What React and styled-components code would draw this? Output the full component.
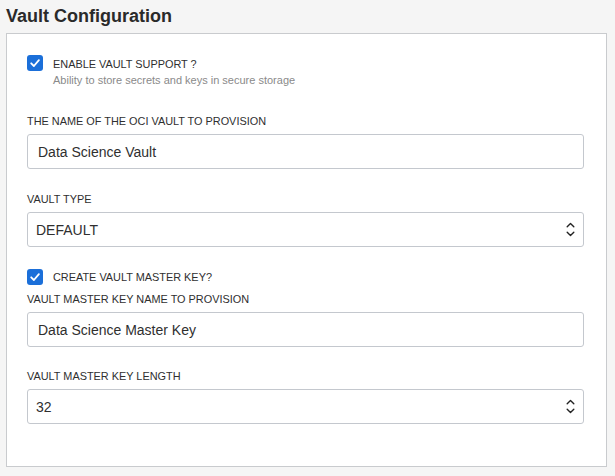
import styled, { createGlobalStyle } from 'styled-components';

const GlobalStyle = createGlobalStyle`
  body {
    margin: 0;
    background: #f5f5f5;
    font-family: 'Liberation Sans', Arial, sans-serif;
    color: #2f2f2f;
  }
`;

const Page = styled.div`
  padding: 5px 9px 9px 6px;
`;

const Title = styled.h2`
  margin: 0 0 6px 0;
  font-size: 18px;
  line-height: 22px;
  font-weight: 700;
  color: #2a2a2a;
`;

const Panel = styled.div`
  width: 601px;
  box-sizing: border-box;
  background: #ffffff;
  border: 1px solid #c9cbce;
  padding: 21px 21px 42px 20px;
  display: flex;
  flex-direction: column;
`;

const CheckRow = styled.div`
  display: flex;
  align-items: ${props => (props.$center ? 'center' : 'flex-start')};
  margin-top: ${props => props.$gap || 0}px;
`;

const Box = styled.span`
  width: 16px;
  height: 16px;
  flex: none;
  border-radius: 3px;
  background: #1b6fd9;
  display: flex;
  align-items: center;
  justify-content: center;
`;

const CheckText = styled.div`
  margin-left: 10px;
  margin-top: ${props => (props.$center ? 0 : 2)}px;
`;

const CheckLabel = styled.div`
  font-size: 10.9px;
  line-height: 14px;
  color: #2f2f2f;
`;

const Hint = styled.div`
  margin-top: 2px;
  font-size: 11px;
  line-height: 15px;
  color: #8a8a8a;
`;

const Field = styled.div`
  display: flex;
  flex-direction: column;
  margin-top: ${props => props.$gap || 0}px;
`;

const Label = styled.label`
  font-size: 10.9px;
  line-height: 14px;
  margin-bottom: 6px;
  color: #2f2f2f;
`;

const TextInput = styled.input`
  width: 557px;
  height: 35px;
  box-sizing: border-box;
  border: 1px solid #c4c8ce;
  border-radius: 3px;
  padding: 0 10px;
  font-family: 'Liberation Sans', Arial, sans-serif;
  font-size: 14px;
  color: #2f2f2f;
  background: #ffffff;
  outline: none;
`;

const Select = styled.div`
  width: 557px;
  height: 35px;
  box-sizing: border-box;
  border: 1px solid #c4c8ce;
  border-radius: 3px;
  padding: 0 8px 0 8px;
  display: flex;
  align-items: center;
  justify-content: space-between;
  font-size: 14px;
  color: #2f2f2f;
`;

function Check() {
  return (
    <Box>
      <svg width="12" height="12" viewBox="0 0 12 12">
        <path d="M2.2 6.3 L4.9 9 L9.9 3.2" fill="none" stroke="#fff" strokeWidth="1.8" strokeLinecap="round" strokeLinejoin="round" />
      </svg>
    </Box>
  );
}

function UpDown() {
  return (
    <svg width="9" height="15" viewBox="0 0 9 15">
      <path d="M1.2 4.8 L4.5 1.6 L7.8 4.8" fill="none" stroke="#222" strokeWidth="1.4" strokeLinecap="round" strokeLinejoin="round" />
      <path d="M1.2 10.2 L4.5 13.4 L7.8 10.2" fill="none" stroke="#222" strokeWidth="1.4" strokeLinecap="round" strokeLinejoin="round" />
    </svg>
  );
}

export default function App() {
  return (
    <Page>
      <GlobalStyle />
      <Title>Vault Configuration</Title>
      <Panel>
        <CheckRow>
          <Check />
          <CheckText>
            <CheckLabel>ENABLE VAULT SUPPORT ?</CheckLabel>
            <Hint>Ability to store secrets and keys in secure storage</Hint>
          </CheckText>
        </CheckRow>

        <Field $gap={26}>
          <Label>THE NAME OF THE OCI VAULT TO PROVISION</Label>
          <TextInput readOnly defaultValue="Data Science Vault" />
        </Field>

        <Field $gap={23}>
          <Label>VAULT TYPE</Label>
          <Select>
            <span>DEFAULT</span>
            <UpDown />
          </Select>
        </Field>

        <CheckRow $center $gap={22}>
          <Check />
          <CheckText $center>
            <CheckLabel>CREATE VAULT MASTER KEY?</CheckLabel>
          </CheckText>
        </CheckRow>

        <Field $gap={7}>
          <Label>VAULT MASTER KEY NAME TO PROVISION</Label>
          <TextInput readOnly defaultValue="Data Science Master Key" />
        </Field>

        <Field $gap={22}>
          <Label>VAULT MASTER KEY LENGTH</Label>
          <Select>
            <span>32</span>
            <UpDown />
          </Select>
        </Field>
      </Panel>
    </Page>
  );
}
